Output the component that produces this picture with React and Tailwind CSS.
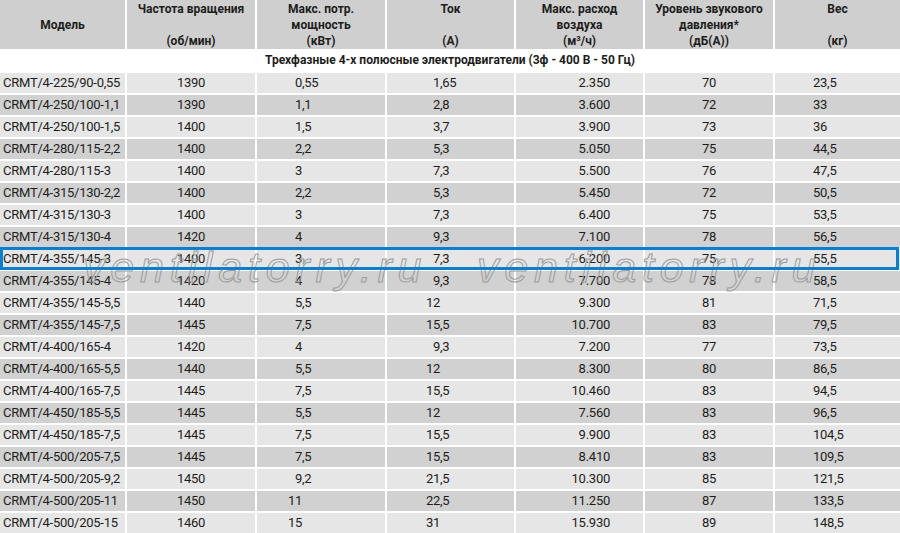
import React from "react";

const rows = [
  ["CRMT/4-225/90-0,55", "1390", "0,55", "1,65", "2.350", "70", "23,5"],
  ["CRMT/4-250/100-1,1", "1390", "1,1", "2,8", "3.600", "72", "33"],
  ["CRMT/4-250/100-1,5", "1400", "1,5", "3,7", "3.900", "73", "36"],
  ["CRMT/4-280/115-2,2", "1400", "2,2", "5,3", "5.050", "75", "44,5"],
  ["CRMT/4-280/115-3", "1400", "3", "7,3", "5.500", "76", "47,5"],
  ["CRMT/4-315/130-2,2", "1400", "2,2", "5,3", "5.450", "72", "50,5"],
  ["CRMT/4-315/130-3", "1400", "3", "7,3", "6.400", "75", "53,5"],
  ["CRMT/4-315/130-4", "1420", "4", "9,3", "7.100", "78", "56,5"],
  ["CRMT/4-355/145-3", "1400", "3", "7,3", "6.200", "75", "55,5"],
  ["CRMT/4-355/145-4", "1420", "4", "9,3", "7.700", "78", "58,5"],
  ["CRMT/4-355/145-5,5", "1440", "5,5", "12", "9.300", "81", "71,5"],
  ["CRMT/4-355/145-7,5", "1445", "7,5", "15,5", "10.700", "83", "79,5"],
  ["CRMT/4-400/165-4", "1420", "4", "9,3", "7.200", "77", "73,5"],
  ["CRMT/4-400/165-5,5", "1440", "5,5", "12", "8.300", "80", "86,5"],
  ["CRMT/4-400/165-7,5", "1445", "7,5", "15,5", "10.460", "83", "94,5"],
  ["CRMT/4-450/185-5,5", "1445", "5,5", "12", "7.560", "83", "96,5"],
  ["CRMT/4-450/185-7,5", "1445", "7,5", "15,5", "9.900", "83", "104,5"],
  ["CRMT/4-500/205-7,5", "1445", "7,5", "15,5", "8.410", "83", "109,5"],
  ["CRMT/4-500/205-9,2", "1450", "9,2", "21,5", "10.300", "85", "121,5"],
  ["CRMT/4-500/205-11", "1450", "11", "22,5", "11.250", "87", "133,5"],
  ["CRMT/4-500/205-15", "1460", "15", "31", "15.930", "89", "148,5"],
];

const headers = [
  ["", "Модель", ""],
  ["Частота вращения", "", "(об/мин)"],
  ["Макс. потр.", "мощность", "(кВт)"],
  ["Ток", "", "(А)"],
  ["Макс. расход", "воздуха", "(м³/ч)"],
  ["Уровень звукового", "давления*", "(дБ(А))"],
  ["Вес", "", "(кг)"],
];

const GRID =
  "grid grid-cols-[125px_128px_128px_127px_127px_128px_1fr] gap-x-[2px]";

function Dec({ v, wide }) {
  const [i, f] = v.split(",");
  return (
    <div className="flex items-center h-full">
      <span className={wide ? "inline-block w-[53px] text-right" : "inline-block w-[45px] text-right"}>
        {i}
      </span>
      {f !== undefined && <span>,{f}</span>}
    </div>
  );
}

function Row({ r, idx }) {
  const bg = idx % 2 === 0 ? "bg-[#e6e6e6]" : "bg-[#d1d1d1]";
  const cell = `${bg} h-[20px] flex items-center`;
  return (
    <div className={`${GRID} relative`}>
      <div className={`${cell} pl-[3px]`}>{r[0]}</div>
      <div className={`${cell} justify-center`}>{r[1]}</div>
      <div className={cell}>
        <Dec v={r[2]} />
      </div>
      <div className={cell}>
        <Dec v={r[3]} wide />
      </div>
      <div className={`${cell} justify-end pr-[33px]`}>{r[4]}</div>
      <div className={`${cell} justify-center`}>{r[5]}</div>
      <div className={`${cell} pl-[38px]`}>{r[6]}</div>
      {idx === 8 && (
        <div className="absolute left-0 right-[1px] -top-[2px] -bottom-[1px] border-[3px] border-[#0a7fd0] pointer-events-none z-20" />
      )}
    </div>
  );
}

export default function App() {
  return (
    <div
      className="relative w-[900px] h-[533px] bg-white overflow-hidden text-[#1d1d1b]"
      style={{ fontFamily: "Roboto, 'Liberation Sans', sans-serif" }}
    >
      <div className={`${GRID} h-[49px]`}>
        {headers.map((h, i) => (
          <div
            key={i}
            className="bg-[#cfcfcf] pt-[1px] flex flex-col items-center text-[12px] font-bold leading-4"
          >
            <div className="h-4">{h[0]}</div>
            <div className="h-4">{h[1]}</div>
            <div className="h-4">{h[2]}</div>
          </div>
        ))}
      </div>
      <div className="h-[22px] flex items-center justify-center text-[12px] font-bold">
        Трехфазные 4-х полюсные электродвигатели (3ф - 400 В - 50 Гц)
      </div>
      <div className="mt-[2px] flex flex-col gap-[2px] text-[13px] tracking-[-0.25px]">
        {rows.map((r, i) => (
          <Row key={i} r={r} idx={i} />
        ))}
      </div>
      <div
        className="absolute top-[246px] left-[83px] z-10 italic text-[43px] leading-[43px] tracking-[5.8px] text-transparent [-webkit-text-stroke:1px_#9c9c9c] whitespace-nowrap pointer-events-none"
        style={{ fontFamily: "'Liberation Sans', Arial, sans-serif" }}
      >
        ventilatorry.ru
      </div>
      <div
        className="absolute top-[246px] left-[477px] z-10 italic text-[43px] leading-[43px] tracking-[5.8px] text-transparent [-webkit-text-stroke:1px_#9c9c9c] whitespace-nowrap pointer-events-none"
        style={{ fontFamily: "'Liberation Sans', Arial, sans-serif" }}
      >
        ventilatorry.ru
      </div>
    </div>
  );
}
